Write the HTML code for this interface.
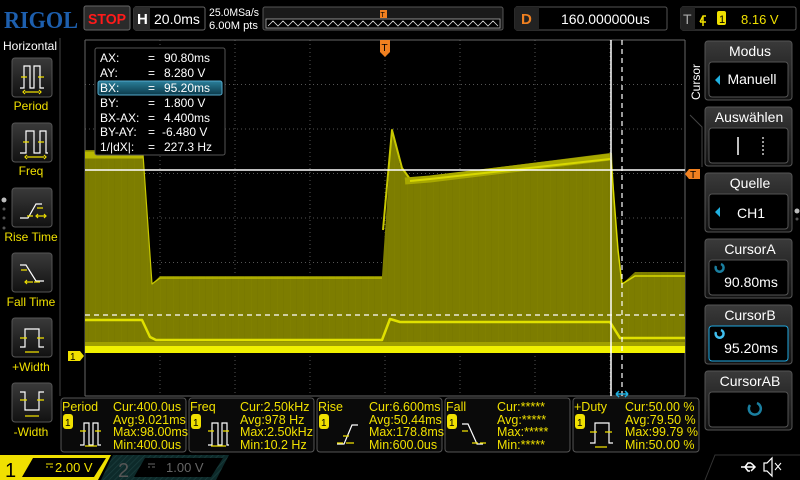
<!DOCTYPE html>
<html><head><meta charset="utf-8"><style>
html,body{margin:0;padding:0;background:#000;width:800px;height:480px;overflow:hidden}
svg{display:block}
text{font-family:"Liberation Sans",sans-serif}
</style></head><body>
<svg width="800" height="480" viewBox="0 0 800 480" xmlns="http://www.w3.org/2000/svg">
<defs>
<linearGradient id="btn" x1="0" y1="0" x2="0" y2="1"><stop offset="0" stop-color="#3a3a3a"/><stop offset="1" stop-color="#111"/></linearGradient>
<linearGradient id="hl" x1="0" y1="0" x2="0" y2="1"><stop offset="0" stop-color="#2a7f9a"/><stop offset="1" stop-color="#0c3a4a"/></linearGradient>
<pattern id="hatch" width="4" height="4" patternUnits="userSpaceOnUse" patternTransform="rotate(45)"><rect width="4" height="4" fill="#0d2a2a"/><line x1="0" y1="0" x2="0" y2="4" stroke="#1a3d3d" stroke-width="1.5"/></pattern>
<pattern id="vt" width="13" height="10" patternUnits="userSpaceOnUse"><rect width="13" height="10" fill="#7d7d00"/><rect x="4" width="1" height="10" fill="#808000"/><rect x="10" width="1" height="10" fill="#7a7a00"/></pattern>
</defs>
<rect width="800" height="480" fill="#000"/>

<!-- TOP BAR -->
<text x="4" y="28" font-weight="bold" font-size="24" fill="#1d5fae" textLength="74" lengthAdjust="spacingAndGlyphs" style="font-family:'Liberation Serif',serif">RIGOL</text>
<rect x="84" y="6" width="46" height="24" rx="2" fill="#2a2a2a" stroke="#666"/>
<text x="88" y="24" font-size="15" font-weight="bold" fill="#ff1a1a" textLength="38" lengthAdjust="spacingAndGlyphs">STOP</text>
<rect x="134" y="7" width="71" height="23" rx="2" fill="#000" stroke="#666"/>
<rect x="134" y="7" width="16" height="23" fill="#2a2a2a"/>
<text x="137" y="24" font-size="15" font-weight="bold" fill="#fff">H</text>
<text x="154" y="24" font-size="14" fill="#fff">20.0ms</text>
<text x="209" y="16" font-size="11" fill="#fff" textLength="50" lengthAdjust="spacingAndGlyphs">25.0MSa/s</text>
<text x="209" y="29" font-size="11" fill="#fff" textLength="49" lengthAdjust="spacingAndGlyphs">6.00M pts</text>
<rect x="263" y="7" width="240" height="23" rx="2" fill="#1a1a1a" stroke="#555"/>
<rect x="266" y="19" width="234" height="9" fill="#000" stroke="#aaa" stroke-width="0.8"/>
<polyline fill="none" stroke="#ddd" stroke-width="0.8" points="268,26 273,21 278,26 283,21 288,26 293,21 298,26 303,21 308,26 313,21 318,26 323,21 328,26 333,21 338,26 343,21 348,26 353,21 358,26 363,21 368,26 373,21 378,26 383,21 388,26 393,21 398,26 403,21 408,26 413,21 418,26 423,21 428,26 433,21 438,26 443,21 448,26 453,21 458,26 463,21 468,26 473,21 478,26 483,21 488,26 493,21 498,26"/>
<rect x="380" y="10" width="7" height="8" fill="#f08020"/>
<text x="380.5" y="17" font-size="7" fill="#000">T</text>
<rect x="515" y="7" width="152" height="23" rx="2" fill="#000" stroke="#555"/>
<rect x="515" y="7" width="24" height="23" fill="#222"/>
<text x="521" y="24" font-size="15" font-weight="bold" fill="#f08020">D</text>
<text x="561" y="24" font-size="14" fill="#fff">160.000000us</text>
<rect x="681" y="7" width="115" height="23" rx="2" fill="#000" stroke="#555"/>
<rect x="681" y="7" width="14" height="23" fill="#222"/>
<text x="683" y="24" font-size="14" fill="#aaa">T</text>
<path d="M700,22 l3,-6 h3 M703,16 v10 M700,22 h6" stroke="#f0e000" stroke-width="1.5" fill="none"/>
<rect x="717" y="11" width="9" height="14" rx="2" fill="#f0e000"/>
<text x="719" y="23" font-size="11" fill="#000">1</text>
<text x="741" y="24" font-size="13" fill="#f0e000">8.16 V</text>

<!-- LEFT PANEL -->
<line x1="60" y1="38" x2="60" y2="396" stroke="#444"/>
<text x="3" y="50" font-size="12" fill="#fff">Horizontal</text>
<g fill="url(#btn)" stroke="#555">
<rect x="12" y="58" width="40" height="39" rx="3"/>
<rect x="12" y="123" width="40" height="39" rx="3"/>
<rect x="12" y="188" width="40" height="39" rx="3"/>
<rect x="12" y="253" width="40" height="39" rx="3"/>
<rect x="12" y="318" width="40" height="39" rx="3"/>
<rect x="12" y="383" width="40" height="39" rx="3"/>
</g>
<g stroke="#fff" stroke-width="1.2" fill="none">
<path d="M20,88 h4 v-22 h6 v22 h4 v-22 h6 v22 h4"/>
<path d="M20,153 h6 v-22 h8 v22 h6 v-22 h6 v22 h2"/>
<path d="M20,218 h8 l8,-14 h6 M24,218 h4"/>
<path d="M20,265 h6 l10,16 h8"/>
<path d="M20,347 h5 v-18 h14 v18 h5"/>
<path d="M20,392 h5 v18 h14 v-18 h5"/>
</g>
<g stroke="#f0e000" stroke-width="1.2" fill="none">
<path d="M21,77 h6 M38,77 h6 M25,92 h14 M25,90 l-2,2 l2,2 M39,90 l2,2 l-2,2"/>
<path d="M23,142 h6 M38,142 h6 M27,157 h17 M27,155 l-2,2 l2,2 M44,155 l2,2 l-2,2"/>
<path d="M37,208 h6 M27,216 h6 M37,216 h8 M38,214 l-2,2 l2,2 M44,214 l2,2 l-2,2"/>
<path d="M21,270 h6 M34,282 h6 M26,282 h7 M27,280 l-2,2 l2,2"/>
<path d="M20,338 h7 M37,338 h7 M25,352 h14"/>
<path d="M20,400 h7 M37,400 h7 M25,416 h14"/>
</g>
<g font-size="12" fill="#f0e000" text-anchor="middle">
<text x="31" y="110">Period</text>
<text x="31" y="175">Freq</text>
<text x="31" y="241">Rise Time</text>
<text x="31" y="306">Fall Time</text>
<text x="31" y="371">+Width</text>
<text x="31" y="436">-Width</text>
</g>
<circle cx="4" cy="200" r="2.5" fill="#bbb"/><circle cx="4" cy="209" r="1.5" fill="#555"/><circle cx="4" cy="218" r="1.5" fill="#555"/><circle cx="4" cy="228" r="1.5" fill="#555"/>

<!-- GRID -->
<rect x="85" y="40" width="600" height="356" fill="#000"/>
<g stroke="#555" stroke-width="1" stroke-dasharray="1,3">
<line x1="160" y1="40" x2="160" y2="396"/><line x1="235" y1="40" x2="235" y2="396"/><line x1="310" y1="40" x2="310" y2="396"/><line x1="385" y1="40" x2="385" y2="396"/><line x1="460" y1="40" x2="460" y2="396"/><line x1="535" y1="40" x2="535" y2="396"/><line x1="610" y1="40" x2="610" y2="396"/>
<line x1="85" y1="84.5" x2="685" y2="84.5"/><line x1="85" y1="129" x2="685" y2="129"/><line x1="85" y1="173.5" x2="685" y2="173.5"/><line x1="85" y1="218" x2="685" y2="218"/><line x1="85" y1="262.5" x2="685" y2="262.5"/><line x1="85" y1="307" x2="685" y2="307"/><line x1="85" y1="351.5" x2="685" y2="351.5"/>
</g>
<g stroke="#666"><line x1="85" y1="40" x2="85" y2="396"/><line x1="685" y1="40" x2="685" y2="396"/><line x1="85" y1="396" x2="685" y2="396"/><line x1="85" y1="40" x2="685" y2="40"/></g>

<!-- WAVEFORM -->
<polygon fill="url(#vt)" points="85,150 143,150 152,284 160,276 382,276 392,128 400,165 410,181 430,176 610,153 612,153 617,245 622,284 635,272 685,272 685,353 85,353"/>
<g fill="none" stroke-linejoin="round">
<polyline stroke="#b8b800" stroke-width="7" points="85,155 143,155"/>
<polyline stroke="#c8c800" stroke-width="1.2" points="143,154 152,284 160,278 382,278"/>
<polyline stroke="#c8c800" stroke-width="2" points="383,230 392,130 402,168 410,179"/>
<polyline stroke="#a8a800" stroke-width="7" points="405,181 430,179 610,157"/>
<polyline stroke="#d8d800" stroke-width="2" points="410,181 430,179 610,159"/>
<polyline stroke="#d8d800" stroke-width="1.5" points="611,160 618,250 622,284 635,276 685,276"/>
<polyline stroke="#e0e000" stroke-width="2.5" points="85,320 142,320 150,337 156,340 382,340 390,319 400,322 610,322 620,338 685,338"/>
<rect x="85" y="346" width="600" height="7" fill="#f0f000" stroke="none"/>
<rect x="85" y="342" width="600" height="4" fill="#a0a000" stroke="none"/>
</g>
<!-- cursors -->
<line x1="85" y1="170" x2="685" y2="170" stroke="#fff" stroke-width="1.5"/>
<line x1="85" y1="315" x2="685" y2="315" stroke="#fff" stroke-width="1.2" stroke-dasharray="5,4"/>
<line x1="611" y1="40" x2="611" y2="396" stroke="#fff" stroke-width="1.5"/>
<line x1="622" y1="40" x2="622" y2="396" stroke="#fff" stroke-width="1.2" stroke-dasharray="5,4"/>
<path d="M616,394 h12 M616,394 l3,-3 M616,394 l3,3 M628,394 l-3,-3 M628,394 l-3,3" stroke="#20b0e0" stroke-width="1.5"/>
<!-- markers -->
<path d="M380,40 h10 v12 l-5,5 l-5,-5z" fill="#f08020"/>
<text x="381.5" y="51" font-size="10" fill="#000">T</text>
<path d="M700,169 h-11 l-4,5 l4,5 h11z" fill="#f08020"/>
<text x="690" y="178" font-size="10" fill="#000">T</text>
<path d="M68,351 h12 l4,5 l-4,5 h-12z" fill="#f0e000"/>
<text x="70" y="360" font-size="10" fill="#000">1</text>

<!-- CURSOR INFO BOX -->
<rect x="95" y="48" width="130" height="107" rx="2" fill="#000" stroke="#555"/>
<rect x="98" y="81" width="124" height="14" rx="2" fill="url(#hl)" stroke="#5ac"/>
<g font-size="12" fill="#fff">
<text x="100" y="62">AX:</text><text x="148" y="62">=</text><text x="164" y="62">90.80ms</text>
<text x="100" y="77">AY:</text><text x="148" y="77">=</text><text x="164" y="77">8.280 V</text>
<text x="100" y="92">BX:</text><text x="148" y="92">=</text><text x="164" y="92">95.20ms</text>
<text x="100" y="107">BY:</text><text x="148" y="107">=</text><text x="164" y="107">1.800 V</text>
<text x="100" y="122">BX-AX:</text><text x="148" y="122">=</text><text x="164" y="122">4.400ms</text>
<text x="100" y="136">BY-AY:</text><text x="148" y="136">=</text><text x="162" y="136">-6.480 V</text>
<text x="100" y="151">1/|dX|:</text><text x="148" y="151">=</text><text x="164" y="151">227.3 Hz</text>
</g>

<!-- RIGHT PANEL -->
<text transform="translate(700,100) rotate(-90)" font-size="12" fill="#fff">Cursor</text>
<path d="M690,115 l12,12 v40" stroke="#444" fill="none"/>
<g stroke="#555" fill="url(#btn)">
<rect x="705" y="41" width="87" height="59" rx="3"/>
<rect x="705" y="107" width="87" height="59" rx="3"/>
<rect x="705" y="173" width="87" height="59" rx="3"/>
<rect x="705" y="239" width="87" height="59" rx="3"/>
<rect x="705" y="305" width="87" height="59" rx="3"/>
<rect x="705" y="371" width="87" height="59" rx="3"/>
</g>
<g stroke="#555" fill="#000">
<rect x="709" y="62" width="79" height="35" rx="3"/>
<rect x="709" y="128" width="79" height="35" rx="3"/>
<rect x="709" y="194" width="79" height="35" rx="3"/>
<rect x="709" y="260" width="79" height="35" rx="3"/>
<rect x="709" y="326" width="79" height="35" rx="3" stroke="#20a8e0"/>
<rect x="709" y="392" width="79" height="35" rx="3"/>
</g>
<g font-size="14" fill="#fff" text-anchor="middle">
<text x="750" y="56">Modus</text>
<text x="752" y="84">Manuell</text>
<text x="749" y="122">Auswählen</text>
<text x="750" y="188">Quelle</text>
<text x="751" y="218">CH1</text>
<text x="750" y="254">CursorA</text>
<text x="751" y="287">90.80ms</text>
<text x="750" y="320">CursorB</text>
<text x="751" y="353">95.20ms</text>
<text x="750" y="386">CursorAB</text>
</g>
<path d="M715,80 l5,-5 v10z M715,212 l5,-5 v10z" fill="#20b0e0"/>
<line x1="738" y1="137" x2="738" y2="155" stroke="#fff" stroke-width="1.5"/>
<line x1="763" y1="137" x2="763" y2="155" stroke="#fff" stroke-width="1.2" stroke-dasharray="2,2"/>
<g stroke="#1a7fa0" stroke-width="2.5" fill="none">
<path d="M716,266 a4,4 0 1 0 5,-2"/>
<path d="M750,405 a6,6 0 1 0 7,-2"/>
</g>
<path d="M716,332 a4,4 0 1 0 5,-2" stroke="#40c0f0" stroke-width="2.5" fill="none"/>
<circle cx="797" cy="211" r="2.5" fill="#bbb"/><circle cx="797" cy="219" r="1.5" fill="#555"/>

<!-- MEASUREMENT BOXES -->
<g stroke="#555" fill="#0a0a0a">
<rect x="61" y="398" width="125" height="54" rx="3"/>
<rect x="189" y="398" width="125" height="54" rx="3"/>
<rect x="317" y="398" width="125" height="54" rx="3"/>
<rect x="445" y="398" width="125" height="54" rx="3"/>
<rect x="573" y="398" width="126" height="54" rx="3"/>
</g>
<g fill="#f0e000">
<rect x="63" y="414" width="10" height="15" rx="3"/><rect x="191" y="414" width="10" height="15" rx="3"/><rect x="319" y="414" width="10" height="15" rx="3"/><rect x="447" y="414" width="10" height="15" rx="3"/><rect x="575" y="414" width="10" height="15" rx="3"/>
</g>
<g font-size="10" fill="#000"><text x="65" y="426">1</text><text x="193" y="426">1</text><text x="321" y="426">1</text><text x="449" y="426">1</text><text x="577" y="426">1</text></g>
<g stroke="#fff" stroke-width="1.2" fill="none">
<path d="M80,445 h4 v-22 h5 v22 h4 v-22 h5 v22 h3"/>
<path d="M208,445 h4 v-22 h6 v22 h4 v-22 h5 v22 h2"/>
<path d="M337,444 h7 l8,-19 h6"/>
<path d="M462,424 h6 l9,20 h6"/>
<path d="M590,443 h5 v-20 h14 v20 h4"/>
</g>
<g stroke="#f0e000" stroke-width="1.2" fill="none">
<path d="M80,431 h6 M95,431 h6 M85,446 h12"/>
<path d="M208,431 h6 M223,431 h6 M211,446 h15"/>
<path d="M343,436 h6 M337,443 h6 M346,443 h8"/>
<path d="M462,431 h6 M472,443 h6 M480,443 h6"/>
<path d="M590,432 h7 M605,432 h7 M595,447 h12"/>
</g>
<g font-size="12.5" fill="#f0e000">
<text x="62" y="411">Period</text>
<text x="113" y="411">Cur:400.0us</text><text x="113" y="424">Avg:9.021ms</text><text x="113" y="436">Max:98.00ms</text><text x="113" y="449">Min:400.0us</text>
<text x="190" y="411">Freq</text>
<text x="240" y="411">Cur:2.50kHz</text><text x="240" y="424">Avg:978 Hz</text><text x="240" y="436">Max:2.50kHz</text><text x="240" y="449">Min:10.2 Hz</text>
<text x="318" y="411">Rise</text>
<text x="369" y="411">Cur:6.600ms</text><text x="369" y="424">Avg:50.44ms</text><text x="369" y="436">Max:178.8ms</text><text x="369" y="449">Min:600.0us</text>
<text x="446" y="411">Fall</text>
<text x="497" y="411">Cur:*****</text><text x="497" y="424">Avg:*****</text><text x="497" y="436">Max:*****</text><text x="497" y="449">Min:*****</text>
<text x="574" y="411">+Duty</text>
<text x="625" y="411">Cur:50.00 %</text><text x="625" y="424">Avg:79.50 %</text><text x="625" y="436">Max:99.79 %</text><text x="625" y="449">Min:50.00 %</text>
</g>

<!-- BOTTOM BAR -->
<path d="M0,455 H111 L98,480 H0z" fill="#f0e000"/>
<path d="M33,458 H106 L94,477 H22z" fill="#000"/>
<text x="5" y="477" font-size="20" fill="#000">1</text>
<path d="M46,464 h7 M46,467 h2 M50,467 h3" stroke="#f0e000" stroke-width="1"/>
<text x="55" y="472" font-size="13" fill="#f0e000">2.00 V</text>
<path d="M113,455 H229 L216,480 H101z" fill="url(#hatch)"/>
<path d="M145,458 H223 L211,477 H134z" fill="#000"/>
<text x="118" y="477" font-size="20" fill="#555">2</text>
<path d="M148,464 h7 M148,467 h2 M152,467 h3" stroke="#666" stroke-width="1"/>
<text x="166" y="472" font-size="13" fill="#666">1.00 V</text>
<path d="M705,480 L715,455 H800" stroke="#333" fill="none"/>
<path d="M741,467 h14 M751,463 l4,4 l-4,4 M745,467 l3,-4 h3 M745,467 l3,4 h2" stroke="#fff" stroke-width="1.5" fill="none"/>
<path d="M764,463 h3 l5,-5 v18 l-5,-5 h-3z" stroke="#fff" stroke-width="1.2" fill="none"/>
<path d="M775,463 l6,7 M781,463 l-6,7" stroke="#fff" stroke-width="1"/>
</svg>
</body></html>
